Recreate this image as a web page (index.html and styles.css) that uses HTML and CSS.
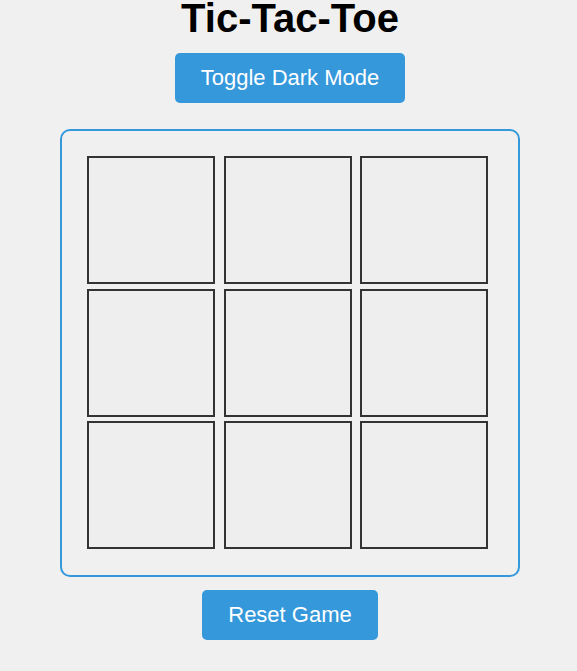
FILE: index.html
```html
<!DOCTYPE html>
<html lang="en">
<head>
  <meta charset="UTF-8">
  <meta name="viewport" content="width=device-width, initial-scale=1.0">
  <title>Tic-Tac-Toe</title>
  <link rel="stylesheet" href="styles.css">
</head>
<body>
  <!-- Header -->
  <h1>Tic-Tac-Toe</h1>
  <button class="btn btn-toggle" id="toggleMode">Toggle Dark Mode</button>

  <!-- Board -->
  <div class="board">
    <div class="grid">
      <div class="cell"></div>
      <div class="cell"></div>
      <div class="cell"></div>
      <div class="cell"></div>
      <div class="cell"></div>
      <div class="cell"></div>
      <div class="cell"></div>
      <div class="cell"></div>
      <div class="cell"></div>
    </div>
  </div>

  <button class="btn btn-reset" id="resetGame">Reset Game</button>
</body>
</html>
```

FILE: styles.css
```css
body {
  font-family: "Liberation Sans", Arial, sans-serif;
  background-color: #f0f0f0;
  margin: 0;
  padding: 0 0 0 3px;
  display: flex;
  flex-direction: column;
  align-items: center;
}
h1 {
  color: #000;
  font-size: 40px;
  line-height: 36px;
  margin: 0;
}
.btn {
  background-color: #3498db;
  color: #fff;
  border: none;
  border-radius: 5px;
  font-family: inherit;
  font-size: 22px;
  line-height: 26px;
  padding: 12px 26px;
  cursor: pointer;
}
.btn-toggle {
  margin-top: 17px;
}
.btn-reset {
  margin-top: 13px;
}

/* Board styles */
.board {
  box-sizing: border-box;
  width: 460px;
  margin-top: 26px;
  padding: 25px 30px 26px 25px;
  border: 2px solid #3498db;
  border-radius: 10px;
}
.grid {
  display: grid;
  grid-template-columns: repeat(3, 128px);
  grid-auto-rows: 128px;
  column-gap: 8.5px;
  row-gap: 4.5px;
}
.cell {
  box-sizing: border-box;
  border: 2px solid #333;
  background-color: #eee;
}
```
